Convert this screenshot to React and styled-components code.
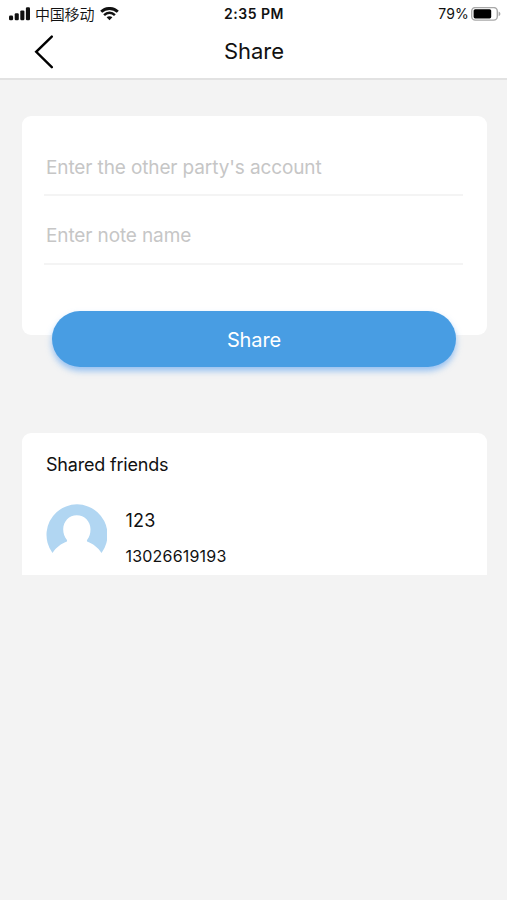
import React from "react";
import styled, { createGlobalStyle } from "styled-components";

const GlobalStyle = createGlobalStyle`
  * {
    box-sizing: border-box;
  }

  body {
    margin: 0;
    background-color: #f3f3f3;
    font-family: Inter, "Noto Sans CJK SC", sans-serif;
    color: #111;
  }
`;

const Page = styled.div`
  display: flex;
  flex-direction: column;
  width: 100%;
  height: 900px;
  background-color: #f3f3f3;
`;

const Header = styled.header`
  height: 80px;
  background-color: #fff;
  border-bottom: 2px solid #e2e2e2;
`;

const StatusBar = styled.div`
  display: grid;
  grid-template-columns: 1fr auto 1fr;
  align-items: center;
  height: 27px;
  padding: 0 6px 0 9px;
  line-height: 27px;
  font-size: 14px;
`;

const StatusGroup = styled.div`
  display: flex;
  align-items: center;
  justify-content: ${(props) => (props.$end ? "flex-end" : "flex-start")};
  height: 27px;

  svg {
    display: block;
    flex: none;
  }
`;

const Carrier = styled.span`
  margin: 0 6px 0 4px;
  font-family: "Noto Sans CJK SC", sans-serif;
  font-size: 15px;
  font-weight: 350;
  letter-spacing: -0.2px;
`;

const Clock = styled.span`
  margin-right: 2px;
  font-size: 14px;
  font-weight: 600;
  letter-spacing: 0.5px;
`;

const Percent = styled.span`
  margin-right: 2px;
  font-size: 14px;
  letter-spacing: 0.2px;
`;

const NavBar = styled.nav`
  display: grid;
  grid-template-columns: 1fr auto 1fr;
  align-items: center;
  height: 50px;
  padding: 0 32px 0 33px;
`;

const BackButton = styled.button`
  display: flex;
  width: 22px;
  height: 34px;
  padding: 0;
  border: none;
  background: none;
`;

const Title = styled.h1`
  margin: 0 0 2px;
  font-size: 22px;
  font-weight: 400;
  line-height: 28px;
`;

const Content = styled.main`
  display: flex;
  flex-direction: column;
  padding: 36px 20px 0 22px;
`;

const FormCard = styled.section`
  height: 219px;
  padding: 34px 24px 0;
  border-radius: 9px;
  background-color: #fff;
`;

const Field = styled.div`
  height: ${(props) => props.$height}px;
  margin: 0 0 0 -2px;
  padding-left: 2px;
  border-bottom: 2px solid #f4f4f4;
  padding-top: ${(props) => props.$top}px;
  font-size: 19px;
  line-height: 34px;
  letter-spacing: -0.12px;
  color: #c6c6c6;
`;

const ShareButton = styled.button`
  height: 56px;
  margin: -24px 31px 0 30px;
  padding: 2px 0 0;
  border: none;
  border-radius: 28px;
  background-color: #489de3;
  box-shadow: 0 4px 6px rgba(90, 160, 240, 0.6);
  font-family: inherit;
  font-size: 20px;
  line-height: 54px;
  letter-spacing: -0.1px;
  color: #fff;
`;

const FriendsCard = styled.section`
  height: 142px;
  margin-top: 66px;
  padding: 18px 24px 0;
  border-radius: 9px 9px 0 0;
  background-color: #fff;
`;

const Heading = styled.h2`
  margin: 0;
  font-size: 18px;
  font-weight: 400;
  line-height: 28px;
  letter-spacing: -0.2px;
`;

const Friend = styled.div`
  display: flex;
  margin-top: 25px;
`;

const FriendInfo = styled.div`
  display: flex;
  flex-direction: column;
  margin-left: 18.5px;
`;

const FriendName = styled.span`
  margin-top: 1px;
  font-size: 18px;
  line-height: 32px;
  letter-spacing: 0.2px;
`;

const FriendAccount = styled.span`
  margin-top: 6px;
  font-size: 16px;
  line-height: 26px;
  letter-spacing: 0.2px;
`;

const SignalIcon = () => (
  <svg width="22" height="14" viewBox="0 0 22 14" fill="#111">
    <rect x="0" y="8.6" width="4.1" height="4.6" rx="1.3" />
    <rect x="5.7" y="6.2" width="4.1" height="7" rx="1.2" />
    <rect x="11.3" y="3.4" width="4.1" height="9.8" rx="1.2" />
    <rect x="16.9" y="0.2" width="4.1" height="13" rx="1.2" />
  </svg>
);

const WifiIcon = () => (
  <svg width="19" height="14" viewBox="0 0 19 14" fill="none" stroke="#111">
    <path d="M1.2 4.8C5.8 0.3 13.2 0.3 17.8 4.8" strokeWidth="2.9" />
    <path d="M4.1 8.1C7.2 5.1 11.8 5.1 14.9 8.1" strokeWidth="2.5" />
    <path d="M6.6 10.3C8.2 8.8 10.8 8.8 12.4 10.3L9.5 13.2Z" fill="#111" stroke="none" />
  </svg>
);

const BatteryIcon = () => (
  <svg width="30" height="14" viewBox="0 0 30 14">
    <rect x="0.7" y="0.5" width="25.6" height="12.6" rx="3.6" fill="#fff" stroke="#a8a8a8" strokeWidth="1.4" />
    <rect x="2.6" y="2.2" width="17.6" height="9.2" rx="1.6" fill="#000" />
    <path d="M27.6 4.4C30 5.4 30 8.2 27.6 9.2Z" fill="#a8a8a8" />
  </svg>
);

const BackIcon = () => (
  <svg width="22" height="34" viewBox="0 0 22 34" fill="none" stroke="#000" strokeWidth="2.4">
    <path d="M18.8 1.6L3.2 16.8L18.8 32.2" strokeLinecap="round" />
  </svg>
);

const Avatar = () => (
  <svg width="61" height="61" viewBox="0 0 61 61">
    <path
      d="M6.5 49A30.5 30.5 0 1 1 55.5 49C52 43.5 46.5 39.5 41.5 37.8Q40.5 37 41.2 35.8C43.5 33 44.5 29.5 44.5 25.3C44.5 17.5 38.5 11.3 30.8 11.3S17.2 17.5 17.2 25.3C17.2 29.5 18.5 33 20.8 35.8Q21.5 37 20.5 37.8C15.5 39.5 10 43.5 6.5 49Z"
      fill="#b1d6f2"
    />
  </svg>
);

const App = () => {
  return (
    <Page>
      <GlobalStyle />
      <Header>
        <StatusBar>
          <StatusGroup>
            <SignalIcon />
            <Carrier>中国移动</Carrier>
            <WifiIcon />
          </StatusGroup>
          <Clock>2:35 PM</Clock>
          <StatusGroup $end>
            <Percent>79%</Percent>
            <BatteryIcon />
          </StatusGroup>
        </StatusBar>
        <NavBar>
          <BackButton aria-label="Back">
            <BackIcon />
          </BackButton>
          <Title>Share</Title>
        </NavBar>
      </Header>
      <Content>
        <FormCard>
          <Field $height={46} $top={1}>Enter the other party's account</Field>
          <Field $height={69} $top={23}>Enter note name</Field>
        </FormCard>
        <ShareButton>Share</ShareButton>
        <FriendsCard>
          <Heading>Shared friends</Heading>
          <Friend>
            <Avatar />
            <FriendInfo>
              <FriendName>123</FriendName>
              <FriendAccount>13026619193</FriendAccount>
            </FriendInfo>
          </Friend>
        </FriendsCard>
      </Content>
    </Page>
  );
};

export default App;
